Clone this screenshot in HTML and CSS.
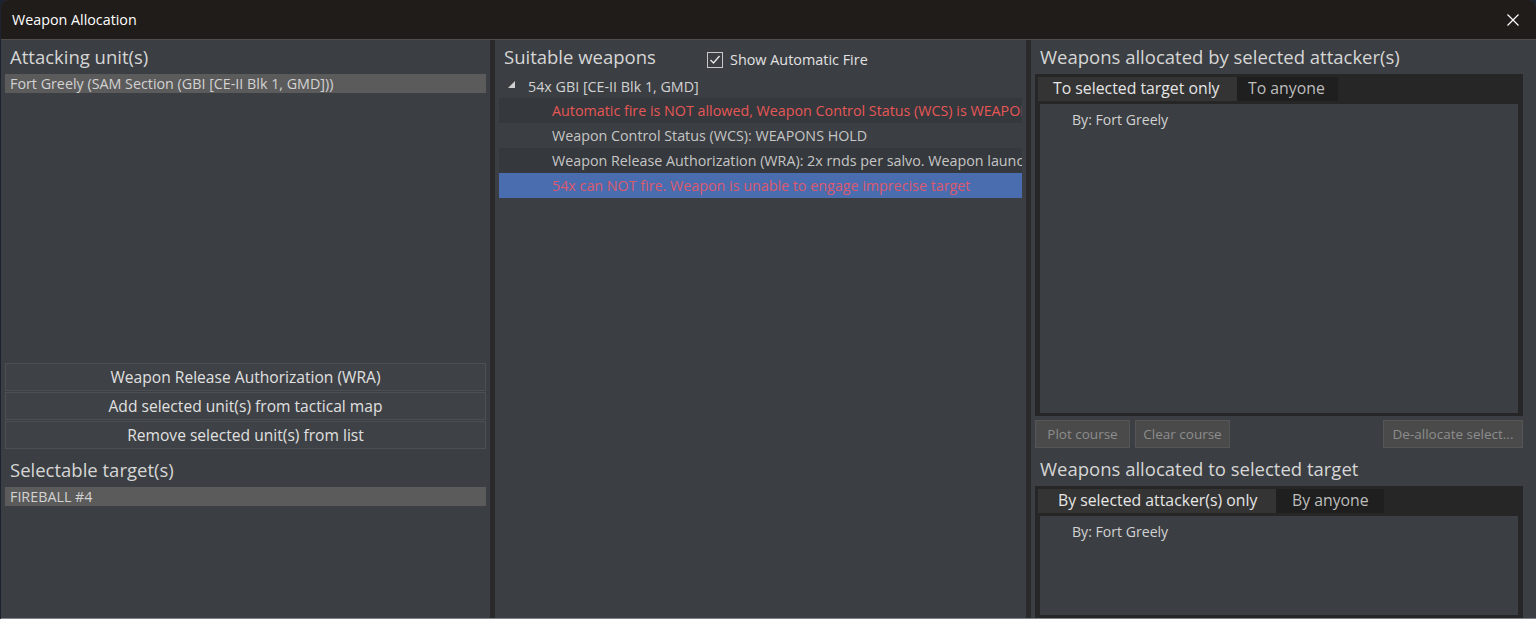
FILE: index.html
```html
<!DOCTYPE html>
<html lang="en">
<head>
  <meta charset="UTF-8">
  <title>Weapon Allocation</title>
  <link rel="stylesheet" href="styles.css">
</head>
<body>
  <div class="window">
    <div class="titlebar">
      <span class="title">Weapon Allocation</span>
      <svg class="close" width="12" height="12" viewBox="0 0 12 12">
        <path d="M0.5 0.5 L11.5 11.5 M11.5 0.5 L0.5 11.5" stroke="#ffffff" stroke-width="1.2"/>
      </svg>
    </div>
    <div class="content">
      <div class="col col-left">
        <h2 class="heading">Attacking unit(s)</h2>
        <div class="list list-attackers">
          <div class="list-item selected">Fort Greely (SAM Section (GBI [CE-II Blk 1, GMD]))</div>
        </div>
        <div class="btn-stack">
          <button class="btn">Weapon Release Authorization (WRA)</button>
          <button class="btn">Add selected unit(s) from tactical map</button>
          <button class="btn">Remove selected unit(s) from list</button>
        </div>
        <h2 class="heading heading-targets">Selectable target(s)</h2>
        <div class="list">
          <div class="list-item selected">FIREBALL #4</div>
        </div>
      </div>

      <div class="col col-mid">
        <div class="mid-head">
          <h2 class="heading">Suitable weapons</h2>
          <label class="check">
            <svg width="16" height="16" viewBox="0 0 16 16">
              <rect x="0.5" y="0.5" width="15" height="15" fill="#3b3e42" stroke="#c8c8c8"/>
              <path d="M3.5 8 L6.5 11 L12.5 4" fill="none" stroke="#e6e6e6" stroke-width="1.4"/>
            </svg>
            <span>Show Automatic Fire</span>
          </label>
        </div>
        <div class="tree">
          <div class="tree-root">
            <svg class="arrow" width="8" height="8" viewBox="0 0 8 8">
              <polygon points="7,0 7,7 0,7" fill="#d0d0d0"/>
            </svg>
            <span>54x GBI [CE-II Blk 1, GMD]</span>
          </div>
          <div class="tree-row alt warn">Automatic fire is NOT allowed, Weapon Control Status (WCS) is WEAPONS HOLD</div>
          <div class="tree-row">Weapon Control Status (WCS): WEAPONS HOLD</div>
          <div class="tree-row alt">Weapon Release Authorization (WRA): 2x rnds per salvo. Weapon launch range: automatic</div>
          <div class="tree-row current warn">54x can NOT fire. Weapon is unable to engage imprecise target</div>
        </div>
      </div>

      <div class="col col-right">
        <h2 class="heading">Weapons allocated by selected attacker(s)</h2>
        <div class="tabs tabs-top">
          <div class="tab-strip">
            <div class="tab active">To selected target only</div>
            <div class="tab">To anyone</div>
          </div>
          <div class="tab-body">
            <div class="by">By: Fort Greely</div>
          </div>
        </div>
        <div class="btn-row">
          <button class="btn-small">Plot course</button>
          <button class="btn-small">Clear course</button>
          <button class="btn-small push">De-allocate select...</button>
        </div>
        <h2 class="heading heading-targets">Weapons allocated to selected target</h2>
        <div class="tabs tabs-bottom">
          <div class="tab-strip">
            <div class="tab active wide">By selected attacker(s) only</div>
            <div class="tab tab-anyone">By anyone</div>
          </div>
          <div class="tab-body">
            <div class="by">By: Fort Greely</div>
          </div>
        </div>
      </div>
    </div>
  </div>
</body>
</html>
```

FILE: styles.css
```css
* {
  box-sizing: border-box;
}
body {
  margin: 0;
  background-color: #1b2230;
  font-family: "Open Sans", "Noto Sans", sans-serif;
  font-size: 14.3px;
  color: #d2d2d2;
  overflow: hidden;
}
.window {
  height: 619px;
  margin-left: 1px;
  display: flex;
  flex-direction: column;
  background-color: #3b3e42;
  border-radius: 8px 8px 0 0;
  border-bottom: 1px solid #80848a;
  overflow: hidden;
}
.titlebar {
  height: 40px;
  flex: none;
  background-color: #201c1a;
  border-bottom: 1px solid #4e4e4e;
  display: flex;
  align-items: center;
  justify-content: space-between;
  padding: 0 17px 0 11px;
}
.title {
  color: #ffffff;
  font-size: 14.3px;
}
.content {
  flex: 1;
  display: flex;
  min-height: 0;
}
.col {
  display: flex;
  flex-direction: column;
  min-height: 0;
}
.col-left {
  width: 494px;
  padding: 0 4px;
  border-right: 5px solid #2a2a2a;
  flex: none;
}
.col-mid {
  width: 536px;
  padding: 0 4px;
  border-right: 5px solid #2a2a2a;
  flex: none;
}
.col-right {
  flex: 1;
  padding: 0 13px 0 4px;
}
.heading {
  margin: 0;
  height: 34px;
  padding: 4px 0 0 5px;
  font-size: 18.5px;
  font-weight: normal;
  color: #d6d6d6;
  white-space: nowrap;
}
.heading-targets {
  height: 38px;
  padding-top: 8px;
}
.list {
  flex: 1;
}
.list-attackers {
  flex: none;
  height: 289px;
}
.list-item {
  height: 19px;
  line-height: 19px;
  padding-left: 5px;
  color: #d2d2d2;
}
.list-item.selected {
  background-color: #5b5b5b;
}
.btn-stack {
  display: flex;
  flex-direction: column;
  gap: 1px;
}
.btn {
  height: 28px;
  font-family: inherit;
  font-size: 15.6px;
  color: #e0e0e0;
  background-color: #3e4145;
  border: 1px solid #4c4f53;
  padding: 0;
}
.mid-head {
  display: flex;
  align-items: flex-start;
}
.mid-head .heading {
  width: 208px;
}
.check {
  display: flex;
  align-items: center;
  gap: 7px;
  margin-top: 10px;
  font-size: 14.4px;
  color: #e2e2e2;
}
.tree-root {
  height: 24px;
  display: flex;
  align-items: center;
  padding-left: 9px;
  gap: 12px;
}
.arrow {
  margin-top: -2px;
}
.tree-row {
  height: 25px;
  line-height: 25px;
  padding-left: 53px;
  white-space: nowrap;
  overflow: hidden;
  color: #c6c6c6;
}
.tree-row.alt {
  background-color: #35383c;
}
.tree-row.warn {
  color: #e65757;
}
.tree-row.current {
  background-color: #4a6db0;
  color: #dc5a6e;
}
.tabs {
  background-color: #262626;
  padding: 3px 5px 0 3px;
  display: flex;
  flex-direction: column;
}
.tabs-top {
  height: 342px;
}
.tabs-bottom {
  flex: 1;
}
.tab-strip {
  display: flex;
  height: 24px;
}
.tab {
  height: 24px;
  line-height: 23px;
  padding: 0 13px 0 11px;
  background-color: #1f1f1f;
  color: #bdbdbd;
  font-size: 15.8px;
  white-space: nowrap;
}
.tab.active {
  width: 199px;
  padding-left: 15px;
  background-color: #343434;
  color: #e6e6e6;
}
.tab.active.wide {
  width: 238px;
  padding-left: 20px;
}
.tab.tab-anyone {
  padding: 0 15px 0 16px;
}
.tab-body {
  flex: 1;
  margin: 3px 0 3px 2px;
  background-color: #3b3e42;
  padding: 6px 0 0 32px;
}
.by {
  font-size: 14.1px;
  color: #d2d2d2;
}
.btn-row {
  display: flex;
  gap: 5px;
  margin-top: 4px;
  height: 28px;
}
.btn-small {
  width: 95px;
  font-family: inherit;
  font-size: 13.5px;
  color: #8d8d8d;
  background-color: #4a4a4a;
  border: 1px solid #555555;
  padding: 0;
}
.btn-small.push {
  margin-left: auto;
  width: 140px;
}
```
